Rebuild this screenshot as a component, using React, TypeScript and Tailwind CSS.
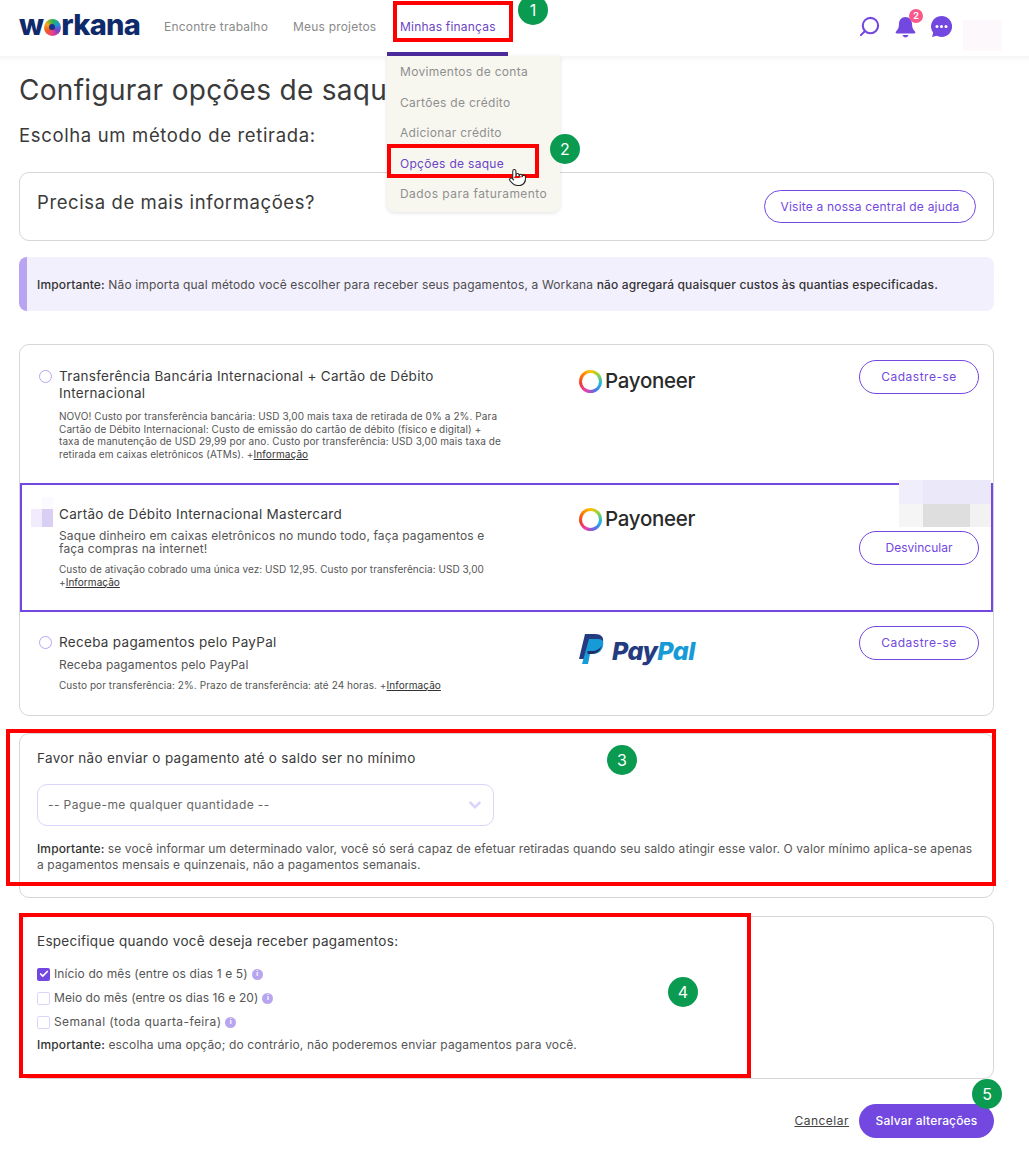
import React from 'react';
import { ChevronDown, Pointer, Search, Check } from 'lucide-react';

const font = 'font-["Inter","Noto_Sans",sans-serif]';

const Underlined: React.FC = () => <span className="underline text-[#333]">Informação</span>;

const Payoneer: React.FC<{ className?: string }> = ({ className }) => (
  <div className={`flex items-center gap-[3px] ${className ?? ''}`}>
    <div className="w-[23px] h-[23px] rounded-full bg-[conic-gradient(#ffc400,#8bd43c,#19b5e8,#5a6ee8,#e83fb0,#f03c2e,#ff7a00,#ffc400)] flex items-center justify-center">
      <div className="w-[17px] h-[17px] rounded-full bg-white" />
    </div>
    <span className="text-[20.500px] leading-[24px] font-medium text-[#2a2a2a] tracking-[-0.3px]">Payoneer</span>
  </div>
);

const PayPal: React.FC<{ className?: string }> = ({ className }) => (
  <div className={`flex items-center gap-[8px] ${className ?? ''}`}>
    <svg width="25" height="30" viewBox="0 0 25 30">
      <path d="M6 0h10c6 0 9 3 8 8-1 6-5 9-11 9H9l-2 8H0z" fill="#253b80" />
      <path d="M10 5h9c5 0 6 3 5 7-1 5-5 8-10 8h-3l-2 10H3z" fill="#179bd7" />
      <path d="M8.500 17h4.500c4 0 8-2 10-6-1 5-5 9-10 9h-4.500z" fill="#222d65" />
    </svg>
    <span className="text-[25px] leading-[30px] font-extrabold italic tracking-[-0.55px] mt-[4px]">
      <span className="text-[#253b80]">Pay</span>
      <span className="text-[#179bd7]">Pal</span>
    </span>
  </div>
);

const OutlineButton: React.FC<{ label: string; className?: string }> = ({ label, className }) => (
  <button className={`w-[120px] h-[34px] rounded-full border border-[#7248e0] text-[12px] text-[#7248e0] bg-white ${className ?? ''}`}>
    {label}
  </button>
);

const Radio: React.FC = () => (
  <div className="w-[13px] h-[13px] rounded-full border border-[#b9a4f3] bg-white shrink-0 mt-[2px]" />
);

const Info: React.FC = () => (
  <span className="inline-flex w-[11px] h-[11px] rounded-full bg-[#b8a5f0] text-white text-[7px] font-bold items-center justify-center ml-[4px] align-[-1px]">
    i
  </span>
);

const CheckRow: React.FC<{ label: string; checked?: boolean; className: string }> = ({ label, checked, className }) => (
  <div className={`flex items-center h-[24px] text-[12px] text-[#555] ${className}`}>
    {checked ? (
      <div className="w-[13px] h-[13px] rounded-[2px] bg-[#7248e0] flex items-center justify-center mr-[4px]">
        <Check className="w-[10px] h-[10px] text-white" strokeWidth={4} />
      </div>
    ) : (
      <div className="w-[13px] h-[13px] rounded-[2px] border border-[#dcd5fb] bg-white mr-[4px]" />
    )}
    <span>{label}</span>
    <Info />
  </div>
);

const Marker: React.FC<{ n: number; className: string }> = ({ n, className }) => (
  <div className={`absolute w-[30px] h-[30px] rounded-full bg-[#0a9b50] text-white text-[16px] flex items-center justify-center ${className}`}>
    {n}
  </div>
);

const Header: React.FC = () => (
  <header className="h-[56px] flex items-center pl-[19px] pr-[28px] bg-white relative">
    <div className="w-[121px] flex items-center text-[#0f2a6b] text-[29px] leading-[30px] font-extrabold tracking-[-0.7px] mt-[-6px]">
      <span>w</span>
      <span className="w-[17px] h-[17px] rounded-full mx-[0.5px] mt-[4px] bg-[conic-gradient(#2fb24c,#1b9ad6,#7b3fc8,#e93f8e,#f05a22,#f7a81b,#2fb24c)] shrink-0 flex items-center justify-center">
        <span className="w-[6px] h-[6px] rounded-full bg-[#1e2f86]" />
      </span>
      <span>rkana</span>
    </div>
    <nav className="flex items-center text-[12px] tracking-[0.2px] text-[#8a8a8a] ml-[24px] mt-[-3px]">
      <span className="w-[129px]">Encontre trabalho</span>
      <span className="w-[107px]">Meus projetos</span>
      <span className="text-[#6a45c6]">Minhas finanças</span>
    </nav>
    <div className="ml-auto flex items-center mt-[-3px]">
      <Search className="w-[23px] h-[23px] text-[#7248e0] -scale-x-100" strokeWidth={2.2} />
      <div className="relative ml-[14px]">
        <svg width="21" height="22" viewBox="0 0 21 22" className="text-[#7248e0]">
          <path d="M10.500 1c-4 0-6.500 3-6.500 7 0 4-1.500 6-3 7.500-.8.8-.3 2 .8 2h17.400c1.100 0 1.600-1.200.8-2-1.500-1.500-3-3.500-3-7.500 0-4-2.500-7-6.500-7z" fill="currentColor" />
          <path d="M7.500 19h6c-.5 1.500-1.700 2.500-3 2.500s-2.500-1-3-2.500z" fill="currentColor" />
        </svg>
        <span className="absolute top-[-7px] right-[-7px] w-[14px] h-[14px] rounded-full bg-[#f8588a] text-white text-[9px] font-bold flex items-center justify-center">2</span>
      </div>
      <svg width="21" height="21" viewBox="0 0 21 21" className="ml-[15px] mr-[49px] text-[#7248e0]">
        <path d="M10.500 0a10.500 10.500 0 1 1-4.800 19.800L1 21l1.200-4.200A10.500 10.500 0 0 1 10.500 0z" fill="currentColor" />
        <circle cx="6" cy="10.500" r="1.500" fill="#fff" />
        <circle cx="10.500" cy="10.500" r="1.500" fill="#fff" />
        <circle cx="15" cy="10.500" r="1.500" fill="#fff" />
      </svg>
    </div>
    <div className="absolute left-[387px] bottom-0 w-[121px] h-[4px] bg-[#4c2c9c]" />
  </header>
);

const Dropdown: React.FC = () => (
  <div className="absolute left-[387px] top-[56px] w-[173px] h-[156px] bg-[#f7f7ef] rounded-b-[8px] shadow-[0_1px_4px_rgba(0,0,0,0.12)] pl-[13px] pt-[1px] text-[12px] tracking-[0.3px] text-[#8f8f8f]">
    <div className="h-[30.500px] flex items-center">Movimentos de conta</div>
    <div className="h-[30.500px] flex items-center">Cartões de crédito</div>
    <div className="h-[30.500px] flex items-center">Adicionar crédito</div>
    <div className="h-[30.500px] flex items-center text-[#6a45c6]">Opções de saque</div>
    <div className="h-[30.500px] flex items-center tracking-[0.45px]">Dados para faturamento</div>
  </div>
);

const Main: React.FC = () => (
  <main className="pl-[19px] pr-[35px]">
    <h1 className="text-[28px] leading-[34px] mt-[17px] text-[#3a3a3a] tracking-[0.3px] whitespace-nowrap">Configurar opções de saque</h1>
    <h2 className="text-[18.500px] leading-[24px] mt-[16px] text-[#3a3a3a] tracking-[0.65px]">Escolha um método de retirada:</h2>

    <section className="mt-[25px] h-[69px] rounded-[10px] border border-[#d6d6d6] flex justify-between pl-[17px] pr-[17px]">
      <div className="text-[18.500px] leading-[24px] mt-[17px] text-[#3a3a3a] tracking-[0.6px]">Precisa de mais informações?</div>
      <button className="w-[212px] h-[33px] mt-[17px] rounded-full border border-[#7248e0] text-[12px] tracking-[0.2px] text-[#7248e0]">
        Visite a nossa central de ajuda
      </button>
    </section>

    <section className="mt-[16px] h-[54px] rounded-[8px] bg-[#f3f0fe] border-l-[8px] border-[#b9a4f3] flex items-center pl-[10px] pt-[2px] text-[12px] tracking-[0.14px] text-[#4d4d4d]">
      <p><span className="font-medium text-[#333]">Importante:</span> Não importa qual método você escolher para receber seus pagamentos, a Workana <span className="font-medium text-[#333]">não agregará quaisquer custos às quantias especificadas.</span></p>
    </section>

    <section className="mt-[33px] h-[372px] rounded-[10px] border border-[#d6d6d6]">
      <div className="h-[138px] flex">
        <div className="w-[559px] pl-[19px] pt-[23px] flex gap-[7px]">
          <Radio />
          <div className="text-[#3a3a3a]">
            <div className="text-[13.500px] leading-[17px] tracking-[0.3px]">Transferência Bancária Internacional + Cartão de Débito<br />Internacional</div>
            <div className="text-[10px] leading-[12.500px] mt-[8px] tracking-[0.09px] text-[#555]">
              NOVO! Custo por transferência bancária: USD 3,00 mais taxa de retirada de 0% a 2%. Para<br />
              Cartão de Débito Internacional: Custo de emissão do cartão de débito (físico e digital) +<br />
              taxa de manutenção de USD 29,99 por ano. Custo por transferência: USD 3,00 mais taxa de<br />
              retirada em caixas eletrônicos (ATMs). +<Underlined />
            </div>
          </div>
        </div>
        <div className="w-[280px] pt-[24px]"><Payoneer /></div>
        <OutlineButton label="Cadastre-se" className="mt-[15px] tracking-[0.5px]" />
      </div>

      <div className="h-[129px] flex border-2 border-[#7248e0]">
        <div className="w-[557px] pl-[37px] pt-[21px] text-[#3a3a3a]">
          <div className="text-[13.500px] leading-[17px] tracking-[0.3px]">Cartão de Débito Internacional Mastercard</div>
          <div className="text-[12px] leading-[13px] mt-[6px] tracking-[0.13px] text-[#555]">
            Saque dinheiro em caixas eletrônicos no mundo todo, faça pagamentos e<br />
            faça compras na internet!
          </div>
          <div className="text-[10px] leading-[13px] mt-[8px] tracking-[0.05px] text-[#555]">
            Custo de ativação cobrado uma única vez: USD 12,95. Custo por transferência: USD 3,00<br />
            +<Underlined />
          </div>
        </div>
        <div className="w-[280px] pt-[22px]"><Payoneer /></div>
        <OutlineButton label="Desvincular" className="mt-[46px]" />
      </div>

      <div className="h-[103px] flex">
        <div className="w-[559px] pl-[19px] pt-[22px] flex gap-[7px]">
          <Radio />
          <div className="text-[#3a3a3a]">
            <div className="text-[13.500px] leading-[17px] tracking-[0.3px]">Receba pagamentos pelo PayPal</div>
            <div className="text-[12px] leading-[14px] mt-[7px] tracking-[0.13px] text-[#555]">Receba pagamentos pelo PayPal</div>
            <div className="text-[10px] leading-[13px] mt-[7px] tracking-[0.07px] text-[#555]">
              Custo por transferência: 2%. Prazo de transferência: até 24 horas. +<Underlined />
            </div>
          </div>
        </div>
        <div className="w-[280px] pt-[20px]"><PayPal /></div>
        <OutlineButton label="Cadastre-se" className="mt-[14px] tracking-[0.5px]" />
      </div>
    </section>

    <section className="mt-[17px] h-[165px] rounded-[10px] border border-[#d6d6d6] pl-[17px] pr-[17px]">
      <div className="text-[13.500px] leading-[18px] mt-[15px] tracking-[0.33px] text-[#3a3a3a]">Favor não enviar o pagamento até o saldo ser no mínimo</div>
      <div className="mt-[17px] w-[457px] h-[42px] rounded-[10px] border border-[#dcd5fb] flex items-center justify-between pl-[10px] pr-[9px] text-[12px] tracking-[0.4px] text-[#666]">
        <span>-- Pague-me qualquer quantidade --</span>
        <ChevronDown className="w-[18px] h-[18px] text-[#dcd5fb]" strokeWidth={3.5} />
      </div>
      <p className="text-[12px] leading-[16px] mt-[15px] tracking-[0.1px] text-[#555]">
        <span className="font-medium text-[#333]">Importante:</span> se você informar um determinado valor, você só será capaz de efetuar retiradas quando seu saldo atingir esse valor. O valor mínimo aplica-se apenas<br />
        a pagamentos mensais e quinzenais, não a pagamentos semanais.
      </p>
    </section>

    <section className="mt-[18px] h-[163px] rounded-[10px] border border-[#d6d6d6] pl-[17px]">
      <div className="text-[13.500px] leading-[18px] mt-[15px] tracking-[0.28px] text-[#3a3a3a]">Especifique quando você deseja receber pagamentos:</div>
      <div className="mt-[12px]">
        <CheckRow label="Início do mês (entre os dias 1 e 5)" checked className="tracking-[0.12px]" />
        <CheckRow label="Meio do mês (entre os dias 16 e 20)" className="tracking-[0.06px]" />
        <CheckRow label="Semanal (toda quarta-feira)" className="tracking-[0.4px]" />
      </div>
      <p className="text-[12px] leading-[16px] mt-[3px] tracking-[0.15px] text-[#555]">
        <span className="font-medium text-[#333]">Importante:</span> escolha uma opção; do contrário, não poderemos enviar pagamentos para você.
      </p>
    </section>

    <footer className="mt-[25px] flex justify-end items-center gap-[10px]">
      <span className="text-[12px] tracking-[0.5px] underline text-[#444]">Cancelar</span>
      <button className="w-[135px] h-[34px] rounded-full bg-[#7248e0] text-white text-[12px] tracking-[0.15px] font-medium">Salvar alterações</button>
    </footer>
  </main>
);

export default function App() {
  return (
    <div className={`relative w-[1029px] h-[1158px] overflow-hidden bg-white ${font}`}>
      <Header />
      <div className="h-[6px] -mb-[6px] bg-gradient-to-b from-[#f5f5f5] to-white" />
      <Main />
      <Dropdown />

      {/* censored blocks from the source capture */}
      <div className="absolute left-[963px] top-[20px] w-[39px] h-[31px] bg-[#fdf8fb]" />
      <div className="absolute left-[899px] top-[480px] w-[92px] h-[47px] grid grid-cols-[24px_47px_21px] grid-rows-2">
        <div className="bg-[#f1eefc]" />
        <div className="bg-[#ebe8fa]" />
        <div className="bg-[#ebe8fa]" />
        <div className="bg-[#f5f5f5]" />
        <div className="bg-[#dedede]" />
        <div className="bg-[#f2f2f2]" />
      </div>
      <div className="absolute left-[31px] top-[497px] w-[22px] h-[30px] grid grid-cols-2 grid-rows-[12px_18px]">
        <div className="bg-white" />
        <div className="bg-[#fafaff]" />
        <div className="bg-[#f1ecfd]" />
        <div className="bg-[#d9cff5]" />
      </div>

      {/* annotations */}
      <div className="absolute left-[393px] top-[1px] w-[120px] h-[41px] border-4 border-[#f00]" />
      <div className="absolute left-[387px] top-[144px] w-[152px] h-[34px] border-4 border-[#f00]" />
      <div className="absolute left-[6px] top-[729px] w-[990px] h-[157px] border-4 border-[#f00]" />
      <div className="absolute left-[19px] top-[913px] w-[732px] h-[165px] border-4 border-[#f00]" />
      <Marker n={1} className="left-[518px] top-[-5px]" />
      <Marker n={2} className="left-[550px] top-[134px]" />
      <Marker n={3} className="left-[607px] top-[745px]" />
      <Marker n={4} className="left-[668px] top-[977px]" />
      <Marker n={5} className="left-[972px] top-[1079px]" />
      <Pointer className="absolute left-[508px] top-[165px] w-[19px] h-[25px] text-[#222] fill-white" strokeWidth={1.3} />
    </div>
  );
}
